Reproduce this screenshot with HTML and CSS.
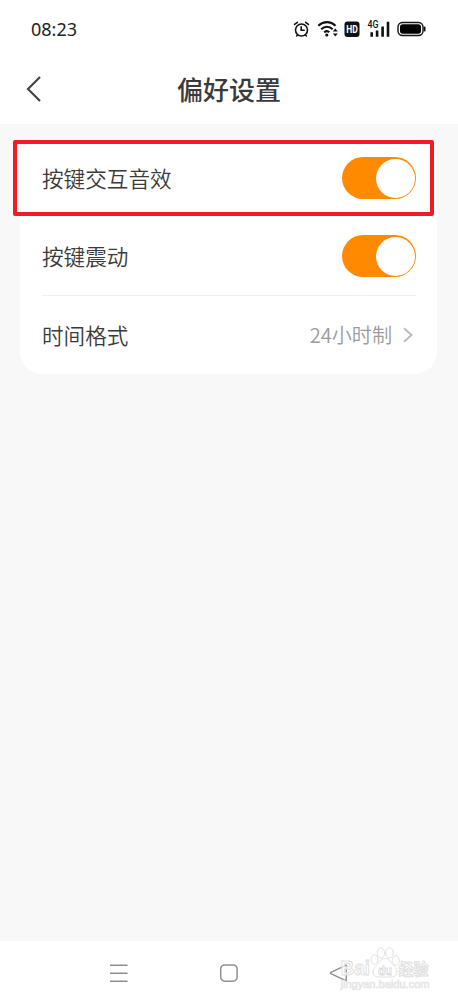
FILE: index.html
```html
<!DOCTYPE html>
<html lang="zh-CN">
<head>
<meta charset="utf-8">
<title>偏好设置</title>
<link rel="stylesheet" href="styles.css">
</head>
<body>
<div class="screen">
  <div class="status">
    <span class="clock">08:23</span>
    <svg class="status-icons" width="134" height="20" viewBox="0 0 134 20" fill="none" stroke="#111">
      <g stroke-width="1.6" stroke-linecap="round">
        <circle cx="9.5" cy="11" r="6"/>
        <path d="M9.2 7.7v3.6h3M2.6 5.4l2.8-2.1M13.6 3.3l2.8 2.1M5.6 16l-1 1M13.4 16l1 1"/>
      </g>
      <g stroke-width="2.2">
        <path d="M26.3 6.7c5.2-4.7 12.3-4.7 17.2 0M29.2 10.2c3.500-3.100 8-3.100 11.500 0M32.200 13.300c1.800-1.400 3.800-1.400 5 0"/>
      </g>
      <circle cx="34.8" cy="16" r="1.6" fill="#111" stroke="none"/>
      <path d="M40.800 12.600l2.500-3 2.500 3zM40.800 14.400l2.500 3 2.500-3z" fill="#111" stroke="none"/>
      <rect x="52.5" y="2.500" width="15" height="15.500" rx="3" fill="#111" stroke="none"/>
      <text class="hd" x="60" y="14" textLength="11.500" lengthAdjust="spacingAndGlyphs">HD</text>
      <text class="net" x="75.500" y="9.200" textLength="11" lengthAdjust="spacingAndGlyphs">4G</text>
      <g stroke-width="2.600">
        <path d="M79.700 13.200v4.600M85.100 11.600v6.200M90.600 7.600v10.200M96 2.800v15"/>
      </g>
      <rect x="106" y="3.500" width="25" height="13" rx="4.500" stroke-width="1.400"/>
      <rect x="108" y="5.300" width="21" height="9.400" rx="2.700" fill="#000" stroke="none"/>
      <path d="M132.600 7.600v4.800" stroke-width="1.800"/>
    </svg>
  </div>
  <div class="header">
    <svg class="back" width="16" height="28" viewBox="0 0 16 28"><path d="M14 2L2 14l12 12" fill="none" stroke="#414141" stroke-width="2.1"/></svg>
    <h1 class="title">偏好设置</h1>
  </div>
  <div class="content">
    <div class="card">
      <div class="row"><span>按键交互音效</span><span class="toggle"></span></div>
      <div class="row"><span>按键震动</span><span class="toggle"></span></div>
      <div class="row"><span>时间格式</span>
        <span class="value">24小时制<svg width="14" height="16" viewBox="0 0 14 16"><path d="M2 1.3L9.500 8 2 14.700" fill="none" stroke="#bdbdbd" stroke-width="2"/></svg></span>
      </div>
      <div class="highlight"></div>
    </div>
  </div>
  <div class="nav">
    <svg width="20" height="20" viewBox="0 0 20 20" fill="none" stroke="#8e8e8e" stroke-width="1.5"><path d="M1 2.200h17.500M1 10.200h17.500M1 18.200h17.500"/></svg>
    <svg width="20" height="20" viewBox="0 0 20 20" fill="none" stroke="#8e8e8e" stroke-width="1.5"><rect x="1.700" y="1.900" width="16.400" height="16.400" rx="4.200"/></svg>
    <svg width="20" height="20" viewBox="0 0 20 20" fill="none" stroke="#8e8e8e" stroke-width="1.3" stroke-linejoin="round"><path d="M17.300 2.200v15.600L1.800 10.600q-.9-.6 0-1.200z"/></svg>
    <svg class="watermark" width="96" height="56" viewBox="0 0 96 56">
      <g class="wm-fill">
        <text class="wm-brand" x="2.5" y="32" textLength="29.5" lengthAdjust="spacingAndGlyphs">Bai</text>
        <ellipse cx="36.500" cy="16.500" rx="3.500" ry="4.800"/>
        <ellipse cx="43" cy="10" rx="3.700" ry="5.200"/>
        <ellipse cx="51.500" cy="10" rx="3.700" ry="5.200"/>
        <ellipse cx="57.700" cy="17.500" rx="3.500" ry="4.800"/>
        <path d="M47 15.500c-4.500 0-5.500 4.500-8.500 7-5.500 4.500-4 11.500 1.500 11.500h14c5.500 0 7-7 1.500-11.500-3-2.500-4-7-8.500-7z"/>
        <text class="wm-cn" x="60.500" y="31.500" textLength="30" lengthAdjust="spacingAndGlyphs">经验</text>
      </g>
      <text class="wm-du" x="40" y="31.500" textLength="14" lengthAdjust="spacingAndGlyphs">du</text>
      <text class="wm-url" x="2.500" y="44.500" textLength="89" lengthAdjust="spacingAndGlyphs">jingyan.baidu.com</text>
    </svg>
  </div>
</div>
</body>
</html>
```
FILE: styles.css
```css
* { box-sizing: border-box; }
body {
  margin: 0;
  background: #fff;
  color: #3a3a3a;
  font-family: "Noto Sans CJK SC", sans-serif;
}
.screen {
  display: flex;
  flex-direction: column;
  width: 458px;
  height: 1001px;
  overflow: hidden;
}
.status {
  display: flex;
  justify-content: space-between;
  align-items: center;
  height: 58px;
  padding: 0 32px 0 31px;
}
.clock {
  color: #222;
  font: 18px/20px "Noto Sans", sans-serif;
}
.status-icons { flex: none; }
.hd { fill: #fff; stroke: none; font: bold 11px "Roboto", sans-serif; text-anchor: middle; }
.net { fill: #111; stroke: none; font: 500 10.5px "Roboto", sans-serif; }
.header {
  display: grid;
  grid-template-columns: 60px 1fr 60px;
  align-items: center;
  height: 66px;
  padding-bottom: 5px;
}
.back { margin-left: 26px; }
.title {
  margin: 0;
  font-size: 26px;
  line-height: 38px;
  font-weight: 500;
  text-align: center;
}
.content {
  flex: 1;
  padding: 15px 21px 0 20px;
  background: #f8f8f8;
}
.card {
  position: relative;
  height: 235px;
  padding: 0 21px 0 22px;
  border-radius: 22px;
  background: #fff;
}
.row {
  display: flex;
  align-items: center;
  justify-content: space-between;
  height: 78.5px;
  font-size: 21.6px;
  font-weight: 350;
  line-height: 32px;
}
.row:nth-child(2) { border-bottom: 1px solid #f0f0f0; }
.toggle {
  display: flex;
  align-items: center;
  justify-content: flex-end;
  width: 74px;
  height: 42px;
  padding-right: 1.4px;
  border-radius: 21px;
  background: #ff8a00;
}
.toggle::after {
  content: "";
  width: 39px;
  height: 39px;
  border-radius: 50%;
  background: #fff;
}
.value {
  display: flex;
  align-items: center;
  gap: 10px;
  color: #9b9b9b;
  font-size: 20.1px;
}
.highlight {
  position: absolute;
  top: 1px;
  left: -7px;
  width: 421px;
  height: 76px;
  border: 4px solid #ee1c25;
  border-radius: 2px;
}
.nav {
  position: relative;
  display: flex;
  justify-content: center;
  align-items: center;
  gap: 90px;
  height: 60px;
  padding-top: 4px;
  background: #fff;
}
.watermark { position: absolute; left: 338px; top: 2px; }
.wm-fill { fill: #fff; fill-opacity: 0.7; stroke: #dedede; stroke-width: 0.9; }
.wm-brand { font: bold 20px "Liberation Sans", sans-serif; }
.wm-cn { font: bold 16px "Noto Sans CJK SC", sans-serif; }
.wm-du { fill: #fff; stroke: #d8d8d8; stroke-width: 0.8; font: bold 13px "Liberation Sans", sans-serif; }
.wm-url { fill: #fff; stroke: #e4e4e4; stroke-width: 0.7; font: 10px "Liberation Sans", sans-serif; }
```
